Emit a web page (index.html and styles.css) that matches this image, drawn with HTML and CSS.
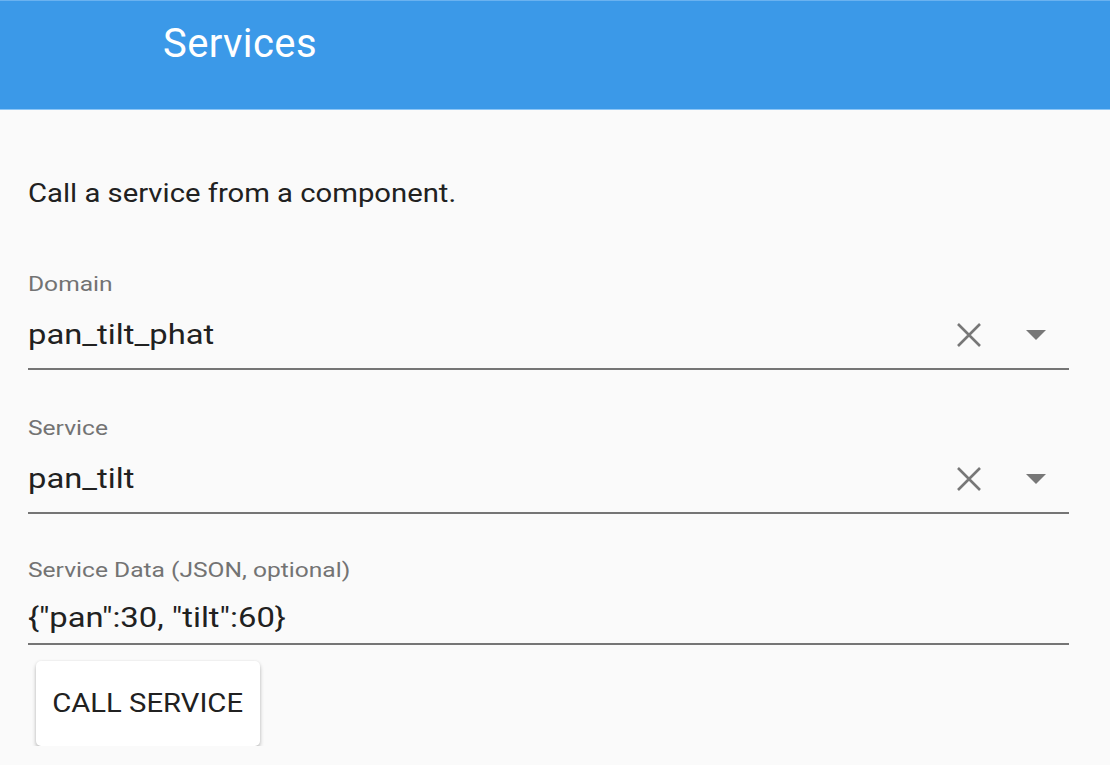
FILE: index.html
```html
<!DOCTYPE html>
<html>
<head>
<meta charset="utf-8">
<link rel="stylesheet" href="styles.css">
</head>
<body>
<header class="toolbar">
  <div class="title">Services</div>
</header>
<main class="content">
  <p class="intro"><span class="wide">Call a service from a component.</span></p>

  <div class="field first">
    <div class="label"><span class="wide">Domain</span></div>
    <div class="value-row">
      <span class="value wide">pan_tilt_phat</span>
      <span class="icons">
        <svg class="clear" width="26" height="24" viewBox="0 0 26 24"><path d="M2 1 L24 23 M24 1 L2 23" stroke="#777" stroke-width="2.6" fill="none"/></svg>
        <svg class="drop" width="20" height="11" viewBox="0 0 20 11"><polygon points="0,0 20,0 10,10" fill="#777"/></svg>
      </span>
    </div>
  </div>

  <div class="field">
    <div class="label"><span class="wide">Service</span></div>
    <div class="value-row">
      <span class="value wide">pan_tilt</span>
      <span class="icons">
        <svg class="clear" width="26" height="24" viewBox="0 0 26 24"><path d="M2 1 L24 23 M24 1 L2 23" stroke="#777" stroke-width="2.6" fill="none"/></svg>
        <svg class="drop" width="20" height="11" viewBox="0 0 20 11"><polygon points="0,0 20,0 10,10" fill="#777"/></svg>
      </span>
    </div>
  </div>

  <div class="field data">
    <div class="label"><span class="wide">Service Data (JSON, optional)</span></div>
    <div class="value-row">
      <span class="value wide">{"pan":30, "tilt":60}</span>
    </div>
  </div>

  <button class="call-btn"><span class="wide center">CALL SERVICE</span></button>
</main>
</body>
</html>
```

FILE: styles.css
```css
html, body {
  margin: 0;
  padding: 0;
  background: #fafafa;
  font-family: Roboto, "Noto Sans", sans-serif;
}

.wide {
  display: inline-block;
  transform: scaleX(1.17);
  transform-origin: left center;
}

.wide.center {
  transform-origin: center center;
}

.toolbar {
  box-sizing: border-box;
  height: 110px;
  background: #3b99e8;
  border-top: 1px solid #6ab2f0;
  border-bottom: 1px solid #8cc6f6;
  padding: 21px 0 0 163px;
}

.title {
  color: #ffffff;
  font-size: 40px;
  line-height: 44px;
  letter-spacing: 0.4px;
  font-weight: 400;
}

.content {
  padding: 69px 41px 0 28px;
  display: flex;
  flex-direction: column;
}

.intro {
  margin: 0;
  font-size: 25px;
  line-height: 30px;
  color: #212121;
}

.field {
  border-bottom: 2px solid #757575;
  padding-bottom: 17px;
  margin-top: 46px;
}

.field.first {
  margin-top: 63px;
}

.field.data {
  margin-top: 44px;
  padding-bottom: 9px;
}

.label {
  font-size: 21px;
  line-height: 24px;
  color: #737373;
}

.value-row {
  display: flex;
  align-items: center;
  justify-content: space-between;
  height: 32px;
  margin-top: 23px;
}

.field.data .value-row {
  margin-top: 20px;
}

.value {
  font-size: 28px;
  line-height: 32px;
  color: #212121;
}

.icons {
  display: flex;
  align-items: center;
  margin-right: 23px;
}

.clear {
  margin-right: 44px;
}

.drop {
  display: block;
}

.call-btn {
  align-self: flex-start;
  margin: 16px 0 0 8px;
  width: 224px;
  height: 85px;
  background: #ffffff;
  border: none;
  border-radius: 5px;
  box-shadow: 0 3px 4px rgba(0,0,0,0.24), 0 0 3px rgba(0,0,0,0.08);
  font-family: Roboto, "Noto Sans", sans-serif;
  font-size: 25px;
  color: #212121;
  padding: 0;
}
```
